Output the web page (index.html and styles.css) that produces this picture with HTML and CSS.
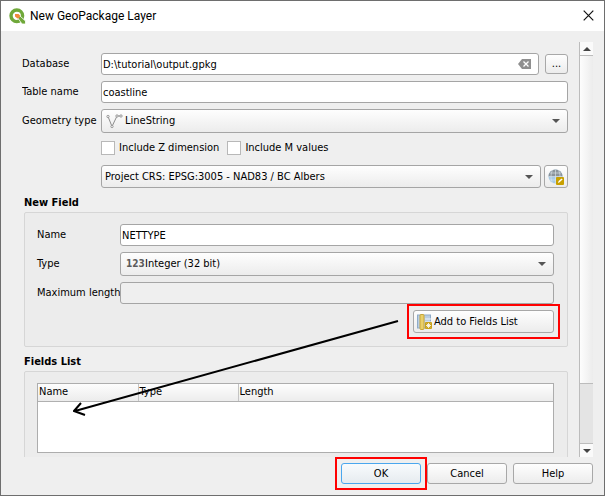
FILE: index.html
```html
<!DOCTYPE html>
<html lang="en">
<head>
<meta charset="utf-8">
<title>New GeoPackage Layer</title>
<link rel="stylesheet" href="styles.css">
</head>
<body>
<main class="dialog">
  <header class="titlebar">
    <svg class="logo" width="17" height="17" viewBox="0 0 17 17" aria-hidden="true">
      <circle cx="7.800" cy="7.800" r="5.800" fill="none" stroke="#6fa83a" stroke-width="3.400"/>
      <path d="M8.500 9.500l2.500-1.500 5.500 5v3h-3.500z" fill="#6fa83a" stroke="#fff" stroke-width=".8"/>
      <path d="M6 6h3.500l1.800 1.800-1.200 2.200-1.600.4L6 8.500z" fill="#f08a3c"/>
    </svg>
    <h1>New GeoPackage Layer</h1>
    <button class="close" type="button" aria-label="Close">
      <svg width="11" height="11" viewBox="0 0 11 11"><path d="M.7.7l9.600 9.600M10.300.7L.7 10.300" stroke="#111" stroke-width="1.200"/></svg>
    </button>
  </header>
  <form class="body">
    <div class="viewport">
      <div class="content">
        <div class="form">
          <label for="db">Database</label>
          <div class="line">
            <div class="field">
              <input id="db" class="text" type="text" value="D:\tutorial\output.gpkg">
              <button class="clear" type="button" aria-label="Clear">
                <svg width="13" height="10" viewBox="0 0 13 10"><path d="M4 0h9v10H4L0 5z" fill="#8f8f8f"/><path d="M5.500 2.500l5 5M10.500 2.500l-5 5" stroke="#fff" stroke-width="1.300"/></svg>
              </button>
            </div>
            <button class="btn browse" type="button">...</button>
          </div>
          <label for="tname">Table name</label>
          <input id="tname" class="text" type="text" value="coastline">
          <label for="geom">Geometry type</label>
          <div class="combo tall">
            <svg class="lead" width="17" height="15" viewBox="0 0 17 15" aria-hidden="true">
              <path d="M2 2.500l4 10 5-10.500h4" fill="none" stroke="#8c8c8c" stroke-width="1"/>
              <g fill="#eee" stroke="#8c8c8c" stroke-width=".8"><circle cx="2" cy="2.500" r="1.200"/><circle cx="6" cy="12.500" r="1.200"/><circle cx="11" cy="2" r="1.200"/><circle cx="15" cy="2" r="1.200"/></g>
            </svg>
            <select id="geom"><option>LineString</option></select>
          </div>
          <div class="checks">
            <label><input type="checkbox">Include Z dimension</label>
            <label><input type="checkbox">Include M values</label>
          </div>
          <div class="line crs">
            <div class="combo"><select aria-label="CRS"><option>Project CRS: EPSG:3005 - NAD83 / BC Albers</option></select></div>
            <button class="btn globe" type="button" aria-label="Select CRS">
              <svg width="16" height="16" viewBox="0 0 16 16">
                <circle cx="7.500" cy="7.500" r="7" fill="#a9cbe6"/>
                <path d="M.5 7.500a7 7 0 0 1 14 0z" fill="#8b949b"/>
                <path d="M.5 7.500h14M2 4h11M2 11h11M7.500.5v14M4.500 1.200c-2 4-2 9 0 12.600M10.500 1.200c2 4 2 9 0 12.600" fill="none" stroke="#dfe8ee" stroke-width=".6"/>
                <rect x="8" y="8" width="8" height="8" rx="1" fill="#c8a000"/>
                <path d="M10 14l.6-2 3-2.600 1 1-3 2.900z" fill="#fff"/>
              </svg>
            </button>
          </div>
        </div>
        <section>
          <h2>New Field</h2>
          <div class="group fields">
            <label for="fname">Name</label>
            <input id="fname" class="text" type="text" value="NETTYPE">
            <label for="ftype">Type</label>
            <div class="combo tall">
              <span class="lead num" aria-hidden="true">123</span>
              <select id="ftype"><option>Integer (32 bit)</option></select>
            </div>
            <label for="flen">Maximum length</label>
            <input id="flen" class="text" type="text" disabled>
            <button class="btn add marked" type="button">
              <svg width="16" height="16" viewBox="0 0 16 16" aria-hidden="true">
                <rect x=".5" y="1" width="13" height="13" fill="#b9cde2" stroke="#8fabc8"/>
                <path d="M8 5h6M8 8h6M8 11h4" stroke="#eef4fa"/>
                <rect x="3" y=".5" width="4" height="15" rx="1" fill="#e9cf69" stroke="#c7a63a"/>
                <rect x="8" y="8" width="7" height="7" rx="1" fill="#c8a21a"/>
                <path d="M11.500 9v5M9 11.500h5M9.800 9.800l3.400 3.400M13.200 9.800l-3.400 3.400" stroke="#fff" stroke-width=".8"/>
              </svg>Add to Fields List
            </button>
          </div>
        </section>
        <section>
          <h2>Fields List</h2>
          <div class="group list">
            <div class="tablebox">
              <table>
                <thead><tr><th>Name</th><th>Type</th><th>Length</th></tr></thead>
                <tbody></tbody>
              </table>
            </div>
          </div>
        </section>
      </div>
      <div class="scroll" aria-hidden="true">
        <span class="step up"></span><span class="thumb"></span><span class="rest"></span><span class="step down"></span>
      </div>
    </div>
    <footer class="actions">
      <button class="btn ok marked" type="button">OK</button>
      <button class="btn" type="button">Cancel</button>
      <button class="btn" type="button">Help</button>
    </footer>
  </form>
  <svg class="arrow" width="326" height="98" viewBox="0 0 326 98" aria-hidden="true">
    <path d="M325 2L2 92M8 84L1 92l11 4" fill="none" stroke="#000" stroke-width="2"/>
  </svg>
</main>
</body>
</html>
```
FILE: styles.css
```css
* { box-sizing: border-box; }
body { margin: 0; background: #efefef; color: #000; font: 11px/16px "DejaVu Sans Condensed", "Noto Sans", sans-serif; }
input, select, button { font: inherit; color: inherit; margin: 0; }
label { white-space: nowrap; }
.dialog { position: relative; min-height: 100vh; border: 1px solid #6e6e6e; display: flex; flex-direction: column; }
.titlebar { height: 30px; background: #fff; display: flex; align-items: center; padding: 0 9px 0 8px; }
.titlebar h1 { flex: 1; margin: 0 0 0 4px; font: 12px/16px Roboto, "Noto Sans", sans-serif; }
.close { border: 0; background: none; padding: 0; width: 12px; height: 12px; display: flex; }
.body { flex: 1; display: flex; flex-direction: column; padding: 11px 11px 10px 21px; }
.viewport { display: flex; height: 415px; overflow: hidden; }
.content { flex: 1; padding: 11px 11px 0 0; }
.form { display: grid; grid-template-columns: 79px 1fr; row-gap: 6px; align-items: center; }
.text { width: 100%; height: 22px; border: 1px solid #a5a5a5; border-radius: 3px; background: #fff; padding: 0 1px; display: block; }
.text:disabled { background: #efefef; }
.line { display: flex; align-items: center; gap: 6px; }
.field { position: relative; flex: 1; }
.clear { position: absolute; right: 8px; top: 6px; border: 0; padding: 0; background: none; width: 13px; height: 10px; display: flex; }
.btn { border: 1px solid #a8a8a8; border-radius: 3px; background: linear-gradient(#fefefe, #ececec); padding: 0; display: flex; align-items: center; justify-content: center; }
.browse { width: 23px; height: 20px; }
.combo { position: relative; flex: 1; height: 23px; border: 1px solid #a5a5a5; border-radius: 3px; background: linear-gradient(#fefefe, #ececec); display: flex; align-items: center; padding-left: 3px; }
.combo.tall { height: 24px; padding-left: 4px; }
.combo select { flex: 1; min-width: 0; height: 100%; appearance: none; border: 0; background: none; padding: 0; }
.combo::after { content: ""; position: absolute; right: 7px; top: 9px; border: 4px solid transparent; border-top-color: #555; border-bottom: 0; }
.lead { margin-right: 2px; flex: none; }
.num { font: bold 10px/14px "DejaVu Sans Condensed", sans-serif; color: #5c5c5c; margin-left: 1px; width: 17px; }
.checks { grid-column: 2; display: flex; gap: 8px; padding: 1px 0 3px; }
.checks label { display: flex; align-items: center; gap: 4px; }
.checks input { appearance: none; width: 14px; height: 14px; border: 1px solid #b8b8b8; background: #fff; }
.crs { grid-column: 2; gap: 3px; }
.globe { width: 24px; height: 23px; }
h2 { margin: 0; padding: 7px 0 1px 2px; font: bold 11px/16px "DejaVu Sans Condensed", sans-serif; }
.group { margin-left: 2px; border: 1px solid #d6d6d6; border-radius: 2px; background: #ececec; padding: 11px 13px 13px 12px; }
.fields { display: grid; grid-template-columns: 83px 1fr; row-gap: 6px; align-items: center; }
.add { grid-column: 2; justify-self: end; width: 141px; height: 23px; justify-content: flex-start; padding-left: 3px; gap: 1px; }
.marked { position: relative; }
.marked::after { content: ""; position: absolute; inset: -7px; border: 2px solid #f00; }
.list { height: 96px; }
.tablebox { height: 70px; border: 1px solid #adadad; background: #fff; }
table { width: 100%; border-collapse: collapse; table-layout: fixed; }
th { height: 17px; padding: 0 0 0 1px; font-weight: normal; text-align: left; background: linear-gradient(#fdfdfd, #ececec); border-bottom: 1px solid #b0b0b0; border-right: 1px solid #c4c4c4; }
th:nth-child(-n+2) { width: 100px; }
th:last-child { border-right: 0; }
.scroll { width: 14px; display: flex; flex-direction: column; border-left: 1px solid #bcbcbc; }
.step { height: 14px; background: #fafafa; display: flex; align-items: center; justify-content: center; }
.step::before { content: ""; border: 4px solid transparent; }
.up { border-bottom: 1px solid #bcbcbc; }
.up::before { border-bottom-color: #444; border-top: 0; }
.down { border-top: 1px solid #bcbcbc; }
.down::before { border-top-color: #444; border-bottom: 0; }
.thumb { flex: 1; background: linear-gradient(90deg, #fdfdfd, #ececec); }
.rest { height: 60px; background: #e4e4e4; border-top: 1px solid #bcbcbc; }
.actions { display: flex; justify-content: flex-end; gap: 6px; padding-top: 6px; }
.actions .btn { width: 80px; height: 21px; }
.actions .ok { border-color: #4aa7ee; background: linear-gradient(#f8fbfd, #e6ebef); }
.arrow { position: absolute; left: 72px; top: 318px; pointer-events: none; }
```
